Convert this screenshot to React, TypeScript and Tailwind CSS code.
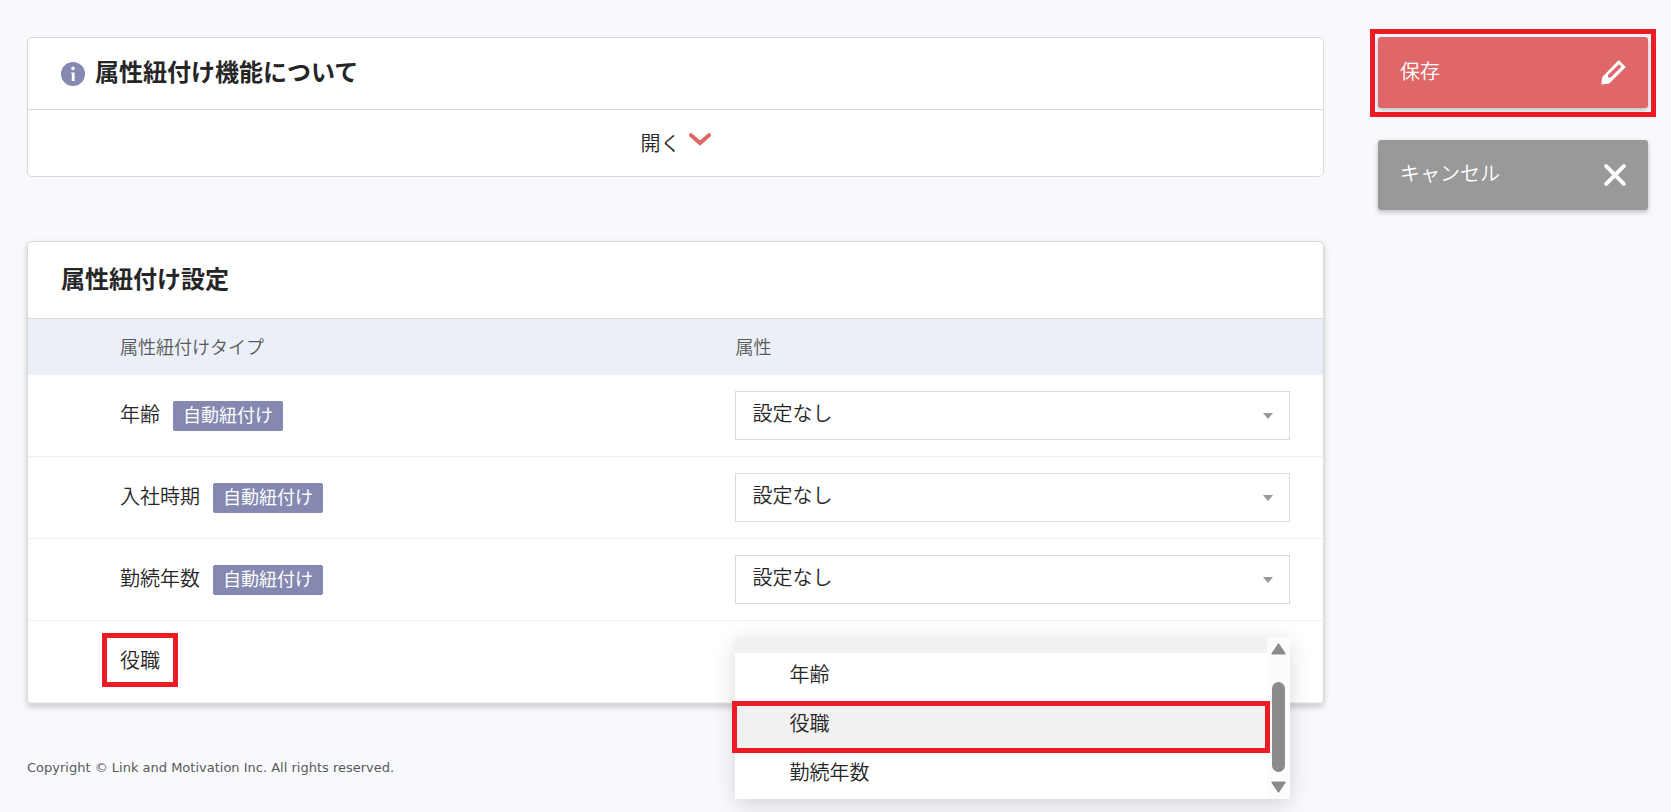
import { useState } from 'react'
import type { ReactNode } from 'react'

type LinkRow = {
  id: string
  name: string
  auto: boolean
}

const rows: LinkRow[] = [
  { id: 'age', name: '年齢', auto: true },
  { id: 'joined', name: '入社時期', auto: true },
  { id: 'tenure', name: '勤続年数', auto: true },
  { id: 'position', name: '役職', auto: false },
]

const attributes = ['年齢', '役職', '勤続年数']

function InfoIcon() {
  return (
    <svg viewBox="0 0 24 24" className="size-6 shrink-0" aria-hidden="true">
      <circle cx="12" cy="12" r="12" fill="#8589b1" />
      <rect x="10.4" y="4.8" width="3.2" height="3.2" rx="0.8" fill="#fff" />
      <path d="M10 10.4h3.6V19h-2.8v-7.4H10z" fill="#fff" />
    </svg>
  )
}

function ChevronIcon() {
  return (
    <svg viewBox="0 0 22 13" className="h-[13px] w-[22px]" aria-hidden="true">
      <path
        d="M2 2.2 11 10 20 2.2"
        fill="none"
        stroke="#df6767"
        strokeWidth="4"
        strokeLinecap="round"
      />
    </svg>
  )
}

function PencilIcon() {
  return (
    <svg viewBox="0 0 25 25" className="size-[25px]" aria-hidden="true">
      <path
        fillRule="evenodd"
        fill="#fff"
        d="M17.3.4q.5-.5 1 0l6 6q.5.5 0 1L8.2 23.6 1 24.4q-.8 0-.6-.9L1.3 17zM17.9 4.2 7 15v2.6h2.6L20.4 6.8z"
      />
    </svg>
  )
}

function CloseIcon() {
  return (
    <svg viewBox="0 0 22 22" className="size-[22px]" aria-hidden="true">
      <path d="M2.2 2.2 19.8 19.8M19.8 2.2 2.2 19.8" stroke="#fff" strokeWidth="4" strokeLinecap="round" />
    </svg>
  )
}

function Badge({ children }: { children: ReactNode }) {
  return (
    <span className="rounded-xs bg-[#8589b1] px-[10px] pb-1 text-lg leading-[26px] font-normal text-white">
      {children}
    </span>
  )
}

function AttributeSelect({ id }: { id: string }) {
  return (
    <div className="relative">
      <select
        id={id}
        className="block h-[49px] w-full appearance-none border border-[#d9d9d9] bg-white pr-10 pb-[6px] pl-4 text-xl text-[#262626]"
        defaultValue=""
      >
        <option value="">設定なし</option>
        {attributes.map((a) => (
          <option key={a}>{a}</option>
        ))}
      </select>
      <svg
        viewBox="0 0 10 6"
        className="pointer-events-none absolute top-[22px] right-[17px] h-[6px] w-[10px]"
        aria-hidden="true"
      >
        <path d="M0 0h10L5 6z" fill="#999" />
      </svg>
    </div>
  )
}

function AttributeMenu() {
  const [selected, setSelected] = useState('役職')

  return (
    <div className="relative h-[49px]">
      <div className="absolute inset-x-0 top-0 z-10 flex h-[162px] bg-white shadow-[0_5px_20px_rgba(0,0,0,0.15)]">
        <div className="flex-1">
          <div className="h-4 bg-[#f1f1f1]" />
          <ul role="listbox" aria-label="属性">
            {attributes.map((a) => (
              <li key={a} role="option" aria-selected={a === selected} className="relative">
                <button
                  type="button"
                  onClick={() => setSelected(a)}
                  className={
                    a === selected
                      ? 'block h-[49px] w-full bg-[#f1f1f1] pb-2 pl-[54px] text-left text-xl'
                      : 'block h-[49px] w-full pb-2 pl-[54px] text-left text-xl'
                  }
                >
                  {a}
                </button>
                {a === selected && (
                  <span className="pointer-events-none absolute -inset-x-[3px] -top-px -bottom-[2px] z-10 border-[5px] border-[#ed1c24]" />
                )}
              </li>
            ))}
          </ul>
        </div>
        <div className="flex w-[23px] flex-col items-center bg-[#fcfcfc] py-[6px]">
          <svg viewBox="0 0 15 12" className="h-3 w-[15px]" aria-hidden="true">
            <path d="M7.5 1.2 13.8 10.8H1.2z" fill="#8b8b8b" stroke="#8b8b8b" strokeWidth="1.6" strokeLinejoin="round" />
          </svg>
          <div className="mt-[27px] h-[90px] w-[13px] rounded-full bg-[#8b8b8b]" />
          <svg viewBox="0 0 15 12" className="mt-auto h-3 w-[15px]" aria-hidden="true">
            <path d="M7.5 10.8 1.2 1.2h12.6z" fill="#8b8b8b" stroke="#8b8b8b" strokeWidth="1.6" strokeLinejoin="round" />
          </svg>
        </div>
      </div>
    </div>
  )
}

export default function App() {
  return (
    <div className="flex min-h-screen items-start gap-[54px] bg-[#f8f9fd] pt-[37px] pr-[23px] pb-6 pl-[27px] font-['Noto_Sans_CJK_JP',sans-serif] font-[350] text-[#262626]">
      <main className="min-w-0 flex-1">
        <section className="rounded-[5px] border border-[#d9d9d9] bg-white">
          <h2 className="flex h-[71px] items-center gap-[10px] px-[33px] text-2xl font-bold">
            <InfoIcon />
            <span className="pb-[6px]">属性紐付け機能について</span>
          </h2>
          <button
            type="button"
            className="flex h-[67px] w-full items-center justify-center gap-2 border-t border-[#d9d9d9] text-xl"
          >
            開く
            <span className="pb-2">
              <ChevronIcon />
            </span>
          </button>
        </section>

        <section className="mt-16 rounded-[5px] border border-[#d9d9d9] bg-white shadow-[0_3px_6px_rgba(0,0,0,0.2)]">
          <h2 className="flex h-[77px] items-center border-b border-[#d9d9d9] px-[33px] pb-1 text-2xl font-bold">
            属性紐付け設定
          </h2>
          <table className="w-full table-fixed border-separate border-spacing-0 text-left">
            <thead className="bg-[#ebeff7] text-lg text-[#595959]">
              <tr className="h-14">
                <th className="w-[52%] pb-[2px] pl-[92px] font-[350]">属性紐付けタイプ</th>
                <th className="pr-[33px] pb-[2px] pl-[34px] font-[350]">属性</th>
              </tr>
            </thead>
            <tbody>
              {rows.map((row) => (
                <tr key={row.id}>
                  <td className="border-b border-[#f0f0f0] pl-[92px]">
                    <div className="flex items-center gap-[13px]">
                      <label htmlFor={row.auto ? row.id : undefined} className="relative pb-1 text-xl">
                        {row.name}
                        {!row.auto && (
                          <span className="pointer-events-none absolute -inset-x-[18px] -top-[13px] -bottom-[9px] border-[5px] border-[#ed1c24]" />
                        )}
                      </label>
                      {row.auto && <Badge>自動紐付け</Badge>}
                    </div>
                  </td>
                  <td className="border-b border-[#f0f0f0] py-4 pr-[33px] pl-[34px]">
                    {row.auto ? <AttributeSelect id={row.id} /> : <AttributeMenu />}
                  </td>
                </tr>
              ))}
            </tbody>
          </table>
        </section>

        <footer className="mt-[54px] font-['DejaVu_Sans',Verdana,sans-serif] text-[13px] leading-5 font-normal text-[#595959]">
          Copyright © Link and Motivation Inc. All rights reserved.
        </footer>
      </main>

      <aside className="flex w-[270px] shrink-0 flex-col gap-8">
        <div className="relative">
          <button
            type="button"
            className="flex h-[71px] w-full items-center justify-between rounded-[3px] bg-[#df6767] px-[22px] text-xl text-white shadow-[0_2px_5px_rgba(0,0,0,0.25)]"
          >
            <span className="pb-1">保存</span>
            <PencilIcon />
          </button>
          <span className="pointer-events-none absolute -inset-x-2 -top-2 -bottom-[9px] border-[5px] border-[#ed1c24]" />
        </div>
        <button
          type="button"
          className="flex h-[70px] w-full items-center justify-between rounded-[3px] bg-[#999] px-[22px] text-xl text-white shadow-[0_2px_5px_rgba(0,0,0,0.25)]"
        >
          <span className="pb-1">キャンセル</span>
          <CloseIcon />
        </button>
      </aside>
    </div>
  )
}
